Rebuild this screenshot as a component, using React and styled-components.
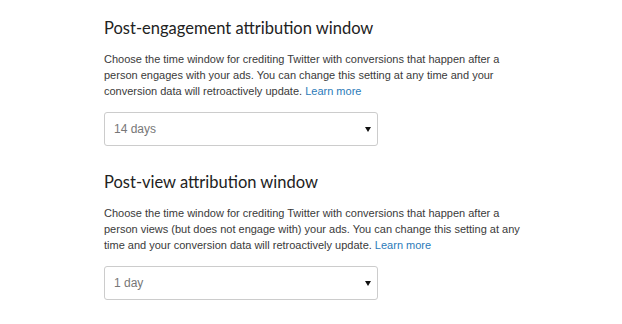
import React from "react";
import styled, { createGlobalStyle } from "styled-components";

const Global = createGlobalStyle`
  html, body { margin: 0; padding: 0; background: #ffffff; }
  body { width: 622px; height: 324px; overflow: hidden; }
`;

const Page = styled.div`
  padding: 18px 0 0 104px;
  display: flex;
  flex-direction: column;
`;

const Section = styled.section`
  display: flex;
  flex-direction: column;
  margin-top: ${(p) => p.$top || 0}px;
`;

const Heading = styled.h2`
  margin: 0;
  font-family: Lato, "Open Sans", sans-serif;
  font-weight: 400;
  font-size: 16.5px;
  line-height: 20px;
  color: #222222;
`;

const Text = styled.p`
  margin: 13px 0 0;
  width: 425px;
  font-family: "Liberation Sans", Arial, sans-serif;
  font-size: 11px;
  line-height: 16px;
  color: #3a3a3a;
`;

const Link = styled.a`
  color: #2b7bb9;
  text-decoration: none;
`;

const SelectBox = styled.div`
  margin-top: 13px;
  box-sizing: border-box;
  width: 274px;
  height: 34px;
  border: 1px solid #cccccc;
  border-radius: 3px;
  background: #ffffff;
  display: flex;
  align-items: center;
  justify-content: space-between;
  padding: 0 6px 0 9px;
  font-family: "Liberation Sans", Arial, sans-serif;
  font-size: 12px;
  color: #777777;
`;

const Arrow = styled.span`
  width: 0;
  height: 0;
  border-left: 3px solid transparent;
  border-right: 3px solid transparent;
  border-top: 5px solid #111111;
`;

export default function App() {
  return (
    <>
      <Global />
      <Page>
        <Section>
          <Heading>Post-engagement attribution window</Heading>
          <Text>
            Choose the time window for crediting Twitter with conversions that happen after a
            person engages with your ads. You can change this setting at any time and your
            conversion data will retroactively update. <Link href="#">Learn more</Link>
          </Text>
          <SelectBox>
            <span>14 days</span>
            <Arrow />
          </SelectBox>
        </Section>
        <Section $top={26}>
          <Heading>Post-view attribution window</Heading>
          <Text>
            Choose the time window for crediting Twitter with conversions that happen after a
            person views (but does not engage with) your ads. You can change this setting at any
            time and your conversion data will retroactively update. <Link href="#">Learn more</Link>
          </Text>
          <SelectBox>
            <span>1 day</span>
            <Arrow />
          </SelectBox>
        </Section>
      </Page>
    </>
  );
}
